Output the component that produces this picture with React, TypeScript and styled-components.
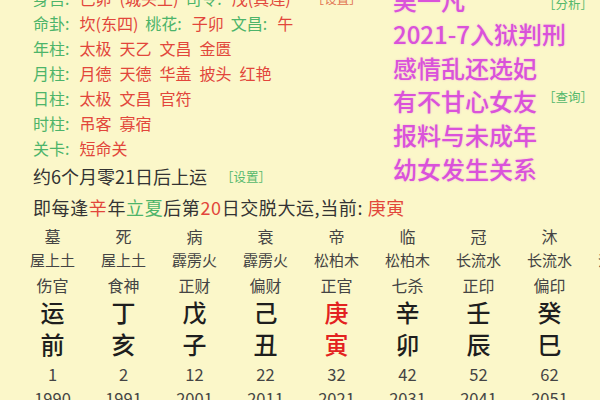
import React from 'react';
import styled, { createGlobalStyle } from 'styled-components';

const Paper = '#fbf7c9';
const Green = '#4db46a';
const Red = '#e2463b';
const Ink = '#333333';
const Magenta = '#da52da';

const GlobalStyle = createGlobalStyle`
	html, body {
		margin: 0;
		padding: 0;
		background: ${Paper};
		overflow: hidden;
	}
	body {
		font-family: "Noto Sans CJK SC", "Noto Sans", sans-serif;
	}
`;

const Page = styled.div`
	width: 600px;
	height: 400px;
	overflow: hidden;
	background: ${Paper};
`;

const Sheet = styled.div`
	margin-top: -15px;
`;

const Top = styled.div`
	display: flex;
`;

const InfoCol = styled.div`
	box-sizing: border-box;
	width: 393px;
	padding-left: 33px;
	flex-shrink: 0;
`;

const InfoLine = styled.div`
	display: flex;
	align-items: center;
	gap: 7px;
	height: 25px;
	font-size: 16px;
	white-space: nowrap;
`;

const Group = styled.span`
	display: flex;
	align-items: center;
`;

const Label = styled.span`
	color: ${Green};
	margin-right: 10px;
`;

const Value = styled.span`
	display: flex;
	gap: 8px;
	color: ${Red};
`;

const Tag = styled.span<{ $tone?: 'green' | 'orange'; $dy?: number }>`
	font-size: 12.5px;
	line-height: 14px;
	letter-spacing: 0;
	color: ${p => (p.$tone === 'orange' ? '#e0704f' : '#55b86c')};
	position: relative;
	top: ${p => p.$dy ?? 0}px;
	white-space: nowrap;
`;

const LineTag = styled(Tag)`
	margin-left: 14px;
`;

const RunLine = styled.div`
	display: flex;
	align-items: center;
	height: 32px;
	font-size: 18px;
	color: ${Ink};
	white-space: nowrap;
`;

const NotesCol = styled.div`
	width: 200px;
	margin-top: -2px;
`;

const NoteLine = styled.div`
	display: flex;
	align-items: center;
	height: 33.7px;
	font-size: 24px;
	font-weight: 500;
	color: ${Magenta};
	text-shadow: 0 0 2px rgba(225, 110, 225, 0.45);
	white-space: nowrap;
`;

const NoteTag = styled(Tag)`
	margin-left: auto;
	text-shadow: none;
	font-weight: 400;
`;

const TransferLine = styled.div`
	display: flex;
	align-items: center;
	height: 30px;
	padding-left: 33px;
	font-size: 18px;
	letter-spacing: 0.6px;
	color: ${Ink};
	white-space: nowrap;
`;

const Hl = styled.span<{ $tone: 'red' | 'green' }>`
	color: ${p => (p.$tone === 'red' ? Red : Green)};
`;

const Table = styled.div`
	display: flex;
	padding-left: 17px;
	padding-top: 2px;
`;

const Column = styled.div`
	display: flex;
	flex-direction: column;
	align-items: center;
	width: 71px;
	flex-shrink: 0;
	white-space: nowrap;
`;

const Cell = styled.div<{ $h: number; $size: number }>`
	height: ${p => p.$h}px;
	line-height: ${p => p.$h}px;
	font-size: ${p => p.$size}px;
	color: #444444;
`;

const PillarCell = styled(Cell)<{ $hot?: boolean }>`
	font-weight: 500;
	color: ${p => (p.$hot ? '#e3221f' : '#1e1e1e')};
`;

const infoLines: { parts: [string, string][]; tag?: string }[] = [
	{ parts: [['身宫', '己卯 (城头土)'], ['司令', '戊(真连)']], tag: '设置' },
	{ parts: [['命卦', '坎(东四)'], ['桃花', '子卯'], ['文昌', '午']] },
	{ parts: [['年柱', '太极 天乙 文昌 金匮']] },
	{ parts: [['月柱', '月德 天德 华盖 披头 红艳']] },
	{ parts: [['日柱', '太极 文昌 官符']] },
	{ parts: [['时柱', '吊客 寡宿']] },
	{ parts: [['关卡', '短命关']] }
];

const notes: { text: string; tag?: string; dy?: number }[] = [
	{ text: '吴一凡', tag: '分析', dy: 4 },
	{ text: '2021-7入狱判刑' },
	{ text: '感情乱还选妃' },
	{ text: '有不甘心女友', tag: '查询', dy: -4 },
	{ text: '报料与未成年' },
	{ text: '幼女发生关系' }
];

const luck = [
	['墓', '屋上土', '伤官', '运', '前', '1', '1990'],
	['死', '屋上土', '食神', '丁', '亥', '2', '1991'],
	['病', '霹雳火', '正财', '戊', '子', '12', '2001'],
	['衰', '霹雳火', '偏财', '己', '丑', '22', '2011'],
	['帝', '松柏木', '正官', '庚', '寅', '32', '2021'],
	['临', '松柏木', '七杀', '辛', '卯', '42', '2031'],
	['冠', '长流水', '正印', '壬', '辰', '52', '2041'],
	['沐', '长流水', '偏印', '癸', '巳', '62', '2051'],
	['长', '沙中金', '劫财', '甲', '午', '72', '2061']
];

const current = 4;

export default function App() {
	return (
		<Page>
			<GlobalStyle />
			<Sheet>
				<Top>
					<InfoCol>
						{infoLines.map((line, i) => (
							<InfoLine key={i}>
								{line.parts.map(([label, value]) => (
									<Group key={label}>
										<Label>{label}:</Label>
										<Value>
											{value.split(' ').map((w, j) => (
												<span key={j}>{w}</span>
											))}
										</Value>
									</Group>
								))}
								{line.tag && (
									<LineTag $tone="orange" $dy={1}>
										［{line.tag}］
									</LineTag>
								)}
							</InfoLine>
						))}
						<RunLine>
							约6个月零21日后上运
							<LineTag $dy={1}>［设置］</LineTag>
						</RunLine>
					</InfoCol>
					<NotesCol>
						{notes.map(n => (
							<NoteLine key={n.text}>
								{n.text}
								{n.tag && <NoteTag $dy={n.dy}>［{n.tag}］</NoteTag>}
							</NoteLine>
						))}
					</NotesCol>
				</Top>
				<TransferLine>
					即每逢<Hl $tone="red">辛</Hl>年<Hl $tone="green">立夏</Hl>后第
					<Hl $tone="red">20</Hl>日交脱大运,当前:&nbsp;<Hl $tone="red">庚寅</Hl>
				</TransferLine>
				<Table>
					{luck.map((c, i) => (
						<Column key={i}>
							<Cell $h={24} $size={16}>{c[0]}</Cell>
							<Cell $h={24} $size={15}>{c[1]}</Cell>
							<Cell $h={26} $size={16}>{c[2]}</Cell>
							<PillarCell $h={28} $size={24} $hot={i === current}>{c[3]}</PillarCell>
							<PillarCell $h={36} $size={24} $hot={i === current}>{c[4]}</PillarCell>
							<Cell $h={24} $size={16.5}>{c[5]}</Cell>
							<Cell $h={24} $size={16.5}>{c[6]}</Cell>
						</Column>
					))}
				</Table>
			</Sheet>
		</Page>
	);
}
